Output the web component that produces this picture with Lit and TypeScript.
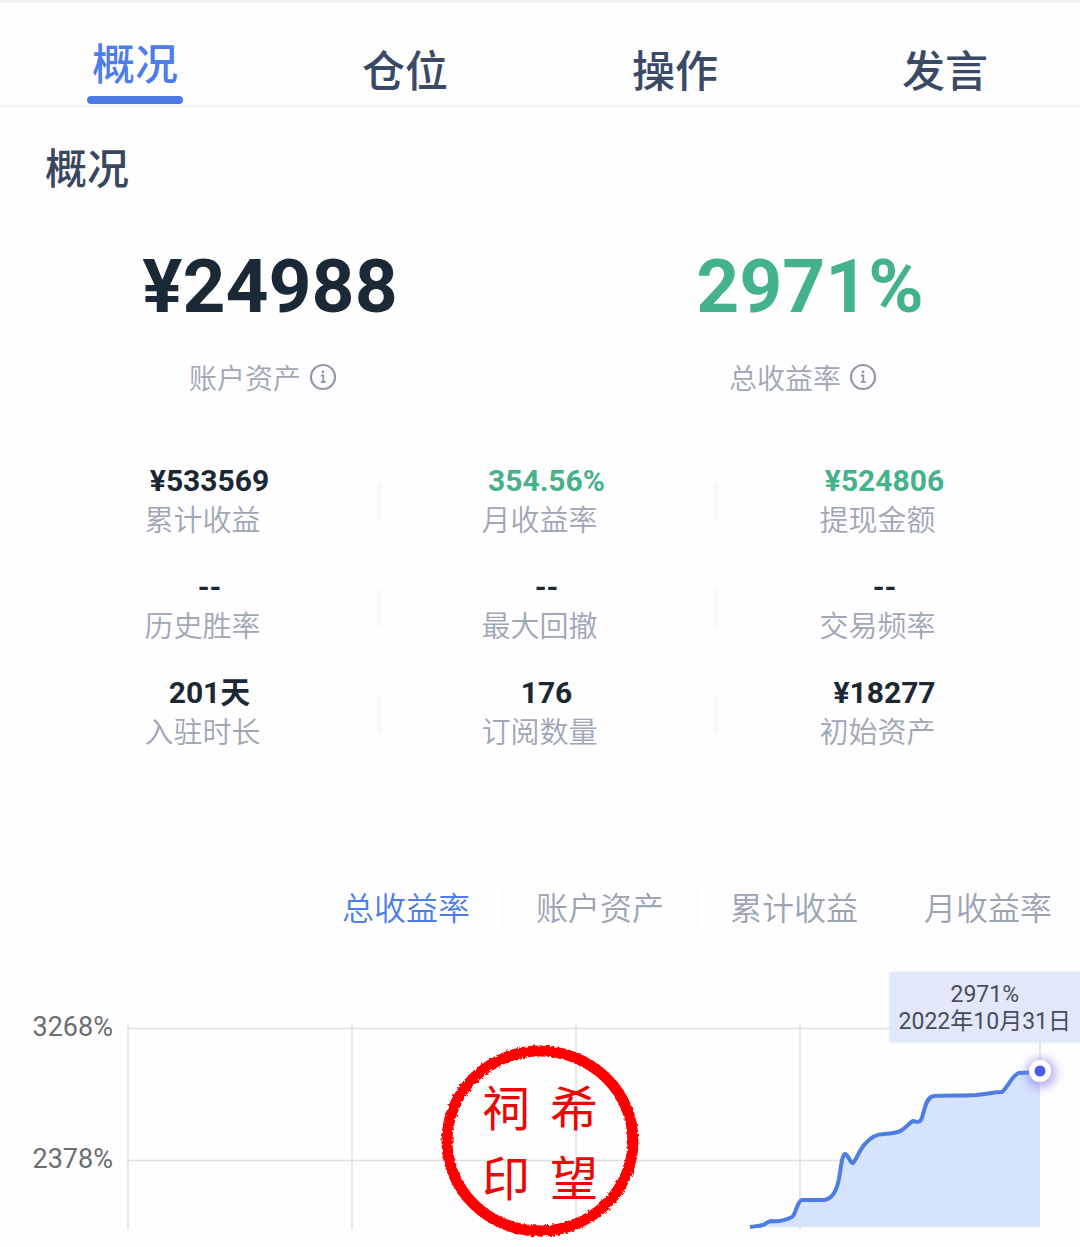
import { LitElement, html, css, svg } from "lit";
import { customElement, property, state } from "lit/decorators.js";
import { classMap } from "lit/directives/class-map.js";

interface Metric {
  value: string;
  label: string;
  gain?: boolean;
}

const TABS = ["概况", "仓位", "操作", "发言"];

const HEADLINE: Metric[] = [
  { value: "¥24988", label: "账户资产" },
  { value: "2971%", label: "总收益率", gain: true },
];

const METRICS: Metric[] = [
  { value: "¥533569", label: "累计收益" },
  { value: "354.56%", label: "月收益率", gain: true },
  { value: "¥524806", label: "提现金额", gain: true },
  { value: "--", label: "历史胜率" },
  { value: "--", label: "最大回撤" },
  { value: "--", label: "交易频率" },
  { value: "201天", label: "入驻时长" },
  { value: "176", label: "订阅数量" },
  { value: "¥18277", label: "初始资产" },
];

const SERIES = ["总收益率", "账户资产", "累计收益", "月收益率"];

const CURVE =
  "M630 267 C636 266 640 266 643 265 C647 263 648 261 652 261 C660 262 668 259 672 257 " +
  "C676 254 677 241 682 240 C688 240 698 240 704 240 C712 239 716 231 718 223 " +
  "C721 212 721 196 725 194 C728 193 730 204 733 203 C737 198 740 189 745 184 " +
  "C751 177 756 174 764 174 C772 173 776 174 782 170 C788 166 790 162 793 161 " +
  "C796 161 798 164 801 160 C804 155 805 136 814 136 C828 135 842 136 856 135 " +
  "C866 134 876 132 882 132 C888 127 893 114 899 113 L920 112";

@customElement("return-chart")
export class ReturnChart extends LitElement {
  static styles = css`
    :host {
      display: block;
    }
    .chart {
      position: relative;
      display: grid;
      grid-template-columns: 1fr 8fr;
      align-items: start;
    }
    .axis {
      display: flex;
      flex-direction: column;
      gap: 100px;
      padding: 51px 7px 0 0;
      text-align: right;
      font-size: 27px;
      line-height: 32px;
      color: #6c6d72;
    }
    .plot {
      display: block;
      width: 100%;
      height: auto;
      overflow: visible;
    }
    .grid {
      stroke: #dfdfe1;
      stroke-width: 1.5;
      fill: none;
    }
    .area {
      fill: #d5e3fd;
    }
    .line {
      fill: none;
      stroke: #4d7ee2;
      stroke-width: 4;
      stroke-linecap: butt;
      stroke-linejoin: round;
    }
    .tooltip {
      position: absolute;
      top: 12px;
      right: 0;
      padding: 9px 9px 7px;
      background: #e2e8f9;
      box-shadow: 0 0 4px #e2e8f9;
      text-align: center;
      font-size: 23px;
      line-height: 27px;
      color: #464d5c;
    }
    .seal {
      position: absolute;
      top: 81px;
      left: 50%;
      display: grid;
      place-content: center;
      grid-template-columns: 68px 68px;
      grid-auto-rows: 70px;
      width: 204px;
      height: 200px;
      margin-left: -102px;
      text-align: center;
      font-family: "Noto Sans CJK SC", sans-serif;
      font-size: 48px;
      line-height: 68px;
      color: #ee0505;
    }
    .ring-box {
      position: absolute;
      inset: 0;
    }
    .ring {
      fill: none;
      stroke: #fe0000;
      stroke-width: 11;
    }
  `;

  render() {
    return html`
      <div class="chart">
        <div class="axis"><span>3268%</span><span>2378%</span></div>
        <svg class="plot" viewBox="0 0 960 286" role="img" aria-label="总收益率">
          <defs>
            <filter id="glow" x="-100%" y="-100%" width="300%" height="300%">
              <feGaussianBlur stdDeviation="5"></feGaussianBlur>
            </filter>
          </defs>
          ${svg`
            <path class="grid" d="M7 68.5H920M7 200.5H920M8 65V270M232 65V270M456 65V270M680 65V270M920 65V112" />
            <path class="area" d="${CURVE}V267H630Z" />
            <path class="line" d=${CURVE} />
            <circle cx="921" cy="113" r="15" fill="#8f7fe0" opacity="0.6" filter="url(#glow)" />
            <circle cx="920" cy="111" r="11" fill="#fff" />
            <circle cx="920" cy="111" r="5.5" fill="#4a5be6" />
          `}
        </svg>
        <div class="tooltip">
          <div>2971%</div>
          <div>2022年10月31日</div>
        </div>
        <div class="seal">
          <svg class="ring-box" viewBox="0 0 204 200" aria-hidden="true">
            <defs>
              <filter id="rough" x="-5%" y="-5%" width="110%" height="110%">
                <feTurbulence type="fractalNoise" baseFrequency="0.35" numOctaves="2" seed="4"></feTurbulence>
                <feDisplacementMap in="SourceGraphic" scale="4"></feDisplacementMap>
              </filter>
            </defs>
            ${svg`<ellipse class="ring" cx="102" cy="100" rx="93" ry="90" filter="url(#rough)" />`}
          </svg>
          <span>祠</span><span>希</span><span>印</span><span>望</span>
        </div>
      </div>
    `;
  }
}

@customElement("metric-cell")
export class MetricCell extends LitElement {
  static styles = css`
    :host {
      display: flex;
      align-items: center;
      text-align: center;
    }
    .body {
      flex: 1;
    }
    .value {
      font-size: 30px;
      line-height: 38px;
      font-weight: 700;
      color: #1b2733;
    }
    .gain {
      color: #46b18b;
    }
    .label {
      padding-right: 14px;
      font-size: 29px;
      line-height: 42px;
      font-weight: 350;
      color: #a0a6b6;
    }
    .rule {
      width: 4px;
      height: 38px;
      margin-right: -2px;
      background: #f9f9fb;
    }
  `;

  @property({ attribute: false }) metric!: Metric;
  @property({ type: Boolean }) ruled = false;

  render() {
    const { value, label, gain } = this.metric;
    return html`
      <div class="body">
        <div class=${classMap({ value: true, gain: !!gain })}>${value}</div>
        <div class="label">${label}</div>
      </div>
      ${this.ruled ? html`<div class="rule"></div>` : null}
    `;
  }
}

@customElement("app-root")
export class AppRoot extends LitElement {
  static styles = css`
    :host {
      display: block;
      background: #fefefe;
      font-family: Roboto, "Noto Sans CJK SC", sans-serif;
      overflow: hidden;
    }
    button {
      border: 0;
      background: none;
      font-family: inherit;
      cursor: pointer;
    }
    .tabs {
      display: grid;
      grid-template-columns: repeat(4, 1fr);
      border-top: 3px solid #f3f3f4;
      border-bottom: 2px solid #f3f3f4;
    }
    .tab {
      position: relative;
      height: 102px;
      padding: 36px 0 0;
      font-size: 43px;
      line-height: 60px;
      font-weight: 500;
      color: #3a4a66;
    }
    .tab.active {
      padding-top: 22px;
      color: #4d7dec;
    }
    .tab.active::after {
      content: "";
      position: absolute;
      bottom: 1px;
      left: 50%;
      width: 96px;
      height: 8px;
      margin-left: -48px;
      border-radius: 4px;
      background: #4d7be6;
    }
    .title {
      margin: 0;
      padding: 33px 45px 41px;
      font-size: 42px;
      line-height: 60px;
      font-weight: 500;
      color: #3a4660;
    }
    .headline {
      display: grid;
      grid-template-columns: repeat(2, 1fr);
      text-align: center;
    }
    .amount {
      font-size: 75px;
      line-height: 90px;
      font-weight: 700;
      color: #1b2835;
    }
    .gain {
      color: #44b38b;
    }
    .caption {
      display: flex;
      justify-content: center;
      align-items: center;
      gap: 8px;
      padding: 29px 14px 0 0;
      font-size: 28px;
      line-height: 40px;
      font-weight: 350;
      color: #a0a6b6;
    }
    .info {
      display: flex;
      padding: 0 0 6px;
      color: #9298a8;
    }
    .metrics {
      display: grid;
      grid-template-columns: repeat(3, 1fr);
      row-gap: 26px;
      padding: 62px 27px 131px 42px;
    }
    .series {
      display: flex;
      justify-content: flex-end;
      padding: 0 28px 27px 0;
    }
    .pick {
      padding: 0;
      font-size: 32px;
      line-height: 48px;
      font-weight: 350;
      color: #9ca3b2;
    }
    .pick.active {
      color: #4d7dec;
    }
    .pick + .pick {
      margin-left: 32px;
      padding-left: 32px;
      border-left: 2px solid #fbfbfc;
    }
  `;

  @state() private tab = 0;
  @state() private series = 0;

  render() {
    return html`
      <nav class="tabs">
        ${TABS.map(
          (name, i) => html`<button
            class=${classMap({ tab: true, active: i === this.tab })}
            @click=${() => (this.tab = i)}
          >${name}</button>`
        )}
      </nav>
      <main>
        <h1 class="title">概况</h1>
        <section class="headline">
          ${HEADLINE.map(
            (m) => html`<div>
              <div class=${classMap({ amount: true, gain: !!m.gain })}>${m.value}</div>
              <div class="caption">
                <span>${m.label}</span>
                <button class="info" aria-label=${m.label}>
                  <svg width="28" height="28" viewBox="0 0 28 28" fill="none" stroke="currentColor" stroke-width="2.2">
                    <circle cx="14" cy="14" r="12" />
                    <path d="M12 12.5H14.3V19M12 19H16.6" stroke-width="1.8" />
                    <circle cx="14" cy="8.8" r="1.4" fill="currentColor" stroke="none" />
                  </svg>
                </button>
              </div>
            </div>`
          )}
        </section>
        <section class="metrics">
          ${METRICS.map(
            (m, i) => html`<metric-cell .metric=${m} ?ruled=${i % 3 < 2}></metric-cell>`
          )}
        </section>
        <div class="series">
          ${SERIES.map(
            (name, i) => html`<button
              class=${classMap({ pick: true, active: i === this.series })}
              @click=${() => (this.series = i)}
            >${name}</button>`
          )}
        </div>
        <return-chart></return-chart>
      </main>
    `;
  }
}
